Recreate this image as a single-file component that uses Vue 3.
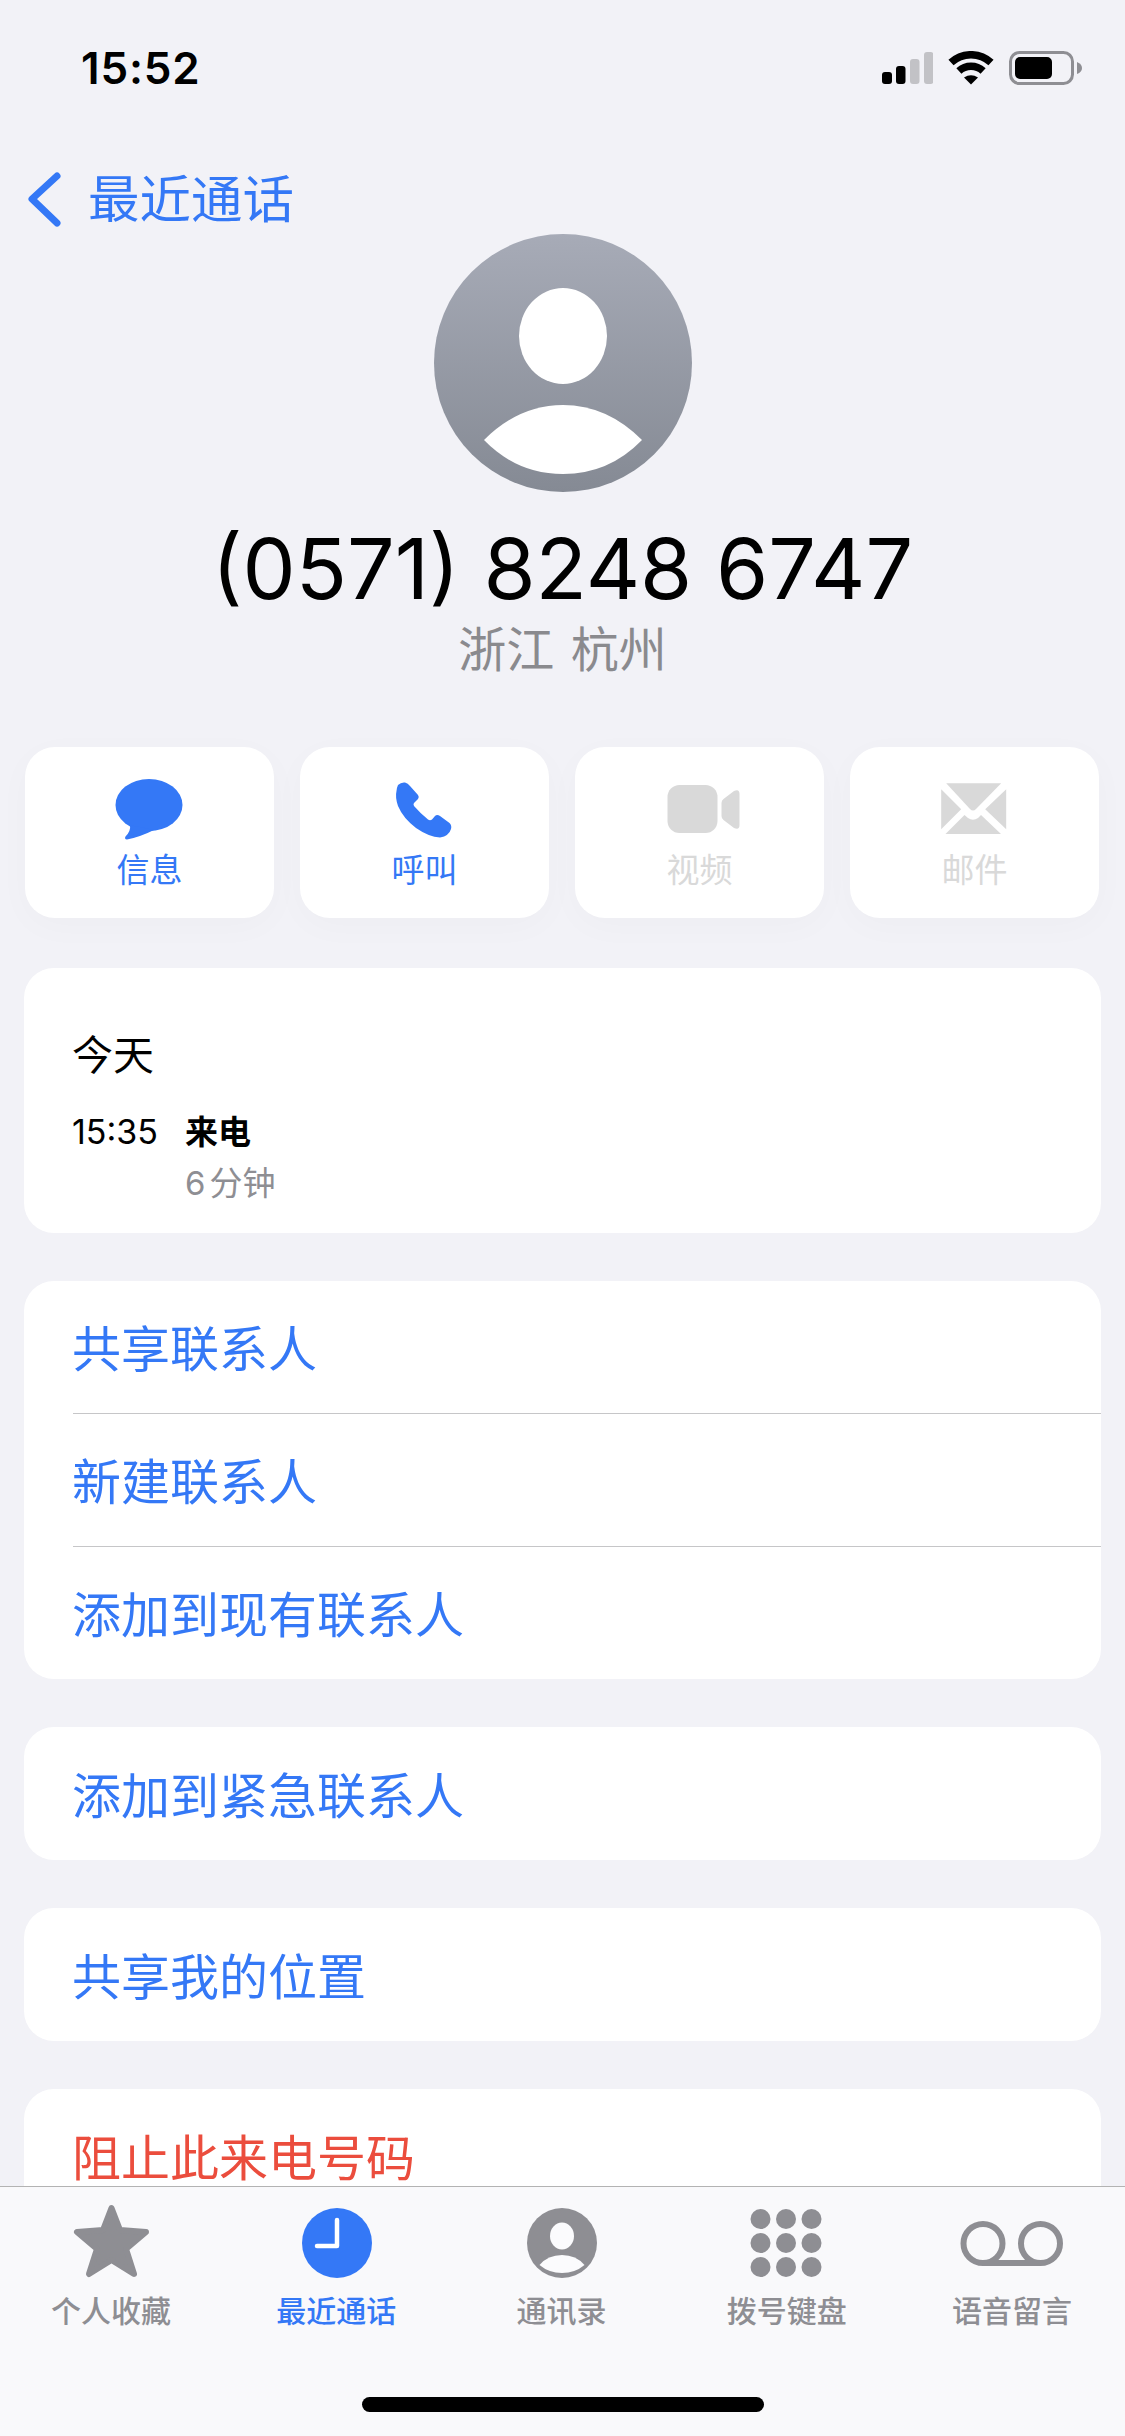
<script setup>
const tabs = [
  { id: 'fav', label: '个人收藏' },
  { id: 'recent', label: '最近通话', active: true },
  { id: 'contacts', label: '通讯录' },
  { id: 'keypad', label: '拨号键盘' },
  { id: 'voicemail', label: '语音留言' },
]
const dots = [33.5, 59, 84.5].flatMap((x) => [15, 39, 63].map((y) => ({ x, y })))
</script>

<template>
  <div class="page">
    <div class="status">
      <span class="time">15:52</span>
      <div class="status-icons">
        <svg width="51" height="34" viewBox="0 0 51 34">
          <rect x="0" y="21" width="10" height="12" rx="3" fill="#000" />
          <rect x="14" y="15" width="9.5" height="18" rx="3" fill="#000" />
          <rect x="28" y="8" width="9.5" height="25" rx="3" fill="#c2c2c6" />
          <rect x="42" y="1" width="9.5" height="32" rx="3" fill="#c2c2c6" />
        </svg>
        <svg width="46" height="34" viewBox="0 0 45 34">
          <path d="M2.5 11.6A29.3 29.3 0 0 1 42.5 11.6" fill="none" stroke="#000" stroke-width="7.5" />
          <path d="M10.4 20A17.8 17.8 0 0 1 34.6 20" fill="none" stroke="#000" stroke-width="7.5" />
          <path d="M22.5 33.5L15.5 26.4Q22.5 22 29.5 26.4Z" fill="#000" />
        </svg>
        <svg width="73" height="34" viewBox="0 0 73 34">
          <rect x="1.5" y="1.5" width="62" height="31" rx="9" fill="none" stroke="#8e8e93" stroke-width="3" />
          <rect x="6" y="6" width="37" height="22" rx="5" fill="#000" />
          <path d="M68 11Q73 13 73 17Q73 21 68 23Z" fill="#8e8e93" />
        </svg>
      </div>
    </div>

    <div class="nav">
      <svg width="40" height="60" viewBox="0 0 40 60">
        <path d="M33 7L8 30L33 54" fill="none" stroke="#3478f6" stroke-width="7" stroke-linecap="round" stroke-linejoin="round" />
      </svg>
      <span class="back-label">最近通话</span>
    </div>

    <svg class="avatar" width="258" height="258" viewBox="0 0 258 258">
      <defs>
        <linearGradient id="avatarFill" x1="0" y1="0" x2="0" y2="1">
          <stop offset="0" stop-color="#a7abb7" />
          <stop offset="1" stop-color="#858a94" />
        </linearGradient>
      </defs>
      <circle cx="129" cy="129" r="129" fill="url(#avatarFill)" />
      <ellipse cx="129" cy="102" rx="44" ry="48" fill="#fff" />
      <path d="M50 206Q85 171 129 171Q173 171 208 206Q175 240 129 240Q83 240 50 206Z" fill="#fff" />
    </svg>

    <div class="number">(0571) 8248 6747</div>
    <div class="region">浙江 杭州</div>

    <div class="actions">
      <div class="action blue">
        <svg width="80" height="62" viewBox="0 0 80 62">
          <ellipse cx="39" cy="26" rx="33.5" ry="26" fill="#3478f6" />
          <path d="M20 46Q21 52 15.5 57.5Q14 60 17 60.5Q30 58 44 51Z" fill="#3478f6" />
        </svg>
        <span>信息</span>
      </div>
      <div class="action blue">
        <svg width="80" height="62" viewBox="0 0 80 62">
          <path d="M13 6Q16 3 20 3.5Q23 4 25 7L33 16Q34.5 18 33 20L29 24Q28 25 29 27Q36 35 43 40.5Q45 42 47 40.5L50 37Q52 35 55 37L64.5 44Q67 46.5 66 50Q64 57 55 58.5Q44 58 31 49Q18 39 13 27Q10 18 11.5 12Q12 8 13 6Z" fill="#3478f6" />
        </svg>
        <span>呼叫</span>
      </div>
      <div class="action off">
        <svg width="80" height="62" viewBox="0 0 80 62">
          <rect x="7.5" y="6" width="50" height="48" rx="12" fill="#d9d9d9" />
          <path d="M61.5 24Q61.5 21.5 63.5 20L74 12Q79.5 9.5 79.5 15V46Q79.5 51.5 74 49L63.5 41Q61.5 39.5 61.5 37Z" fill="#d9d9d9" />
        </svg>
        <span>视频</span>
      </div>
      <div class="action off">
        <svg width="80" height="62" viewBox="0 0 80 62">
          <path d="M11.2 4.3H66.2L41 30Q38 33 35 30Z" fill="#d9d9d9" />
          <path d="M6.2 10.3V50.3L26.2 30.3Z" fill="#d9d9d9" />
          <path d="M71.2 10.3V50.3L50.2 30.3Z" fill="#d9d9d9" />
          <path d="M10.5 55L29.5 36L33 39Q38 42.5 43 39L46 36L66 55Z" fill="#d9d9d9" />
        </svg>
        <span>邮件</span>
      </div>
    </div>

    <div class="sections">
      <div class="card history">
        <div class="day">今天</div>
        <div class="call">
          <span class="call-time">15:35</span>
          <span class="call-type">来电</span>
          <span class="call-length"><i>6</i>分钟</span>
        </div>
      </div>

      <div class="card">
        <div class="row">共享联系人</div>
        <div class="row">新建联系人</div>
        <div class="row">添加到现有联系人</div>
      </div>
      <div class="card">
        <div class="row">添加到紧急联系人</div>
      </div>
      <div class="card">
        <div class="row">共享我的位置</div>
      </div>
      <div class="card">
        <div class="row red">阻止此来电号码</div>
      </div>
    </div>

    <div class="tabbar">
      <div class="tabs">
        <div v-for="tab in tabs" :key="tab.id" class="tab" :class="{ active: tab.active }">
          <svg width="120" height="80" viewBox="0 0 120 80">
            <polygon
              v-if="tab.id === 'fav'"
              points="59.5,4 68,26 94,28 74,45 82,70 59.5,56 37,70 45,45 25,28 51,26"
              fill="#8e8e93" stroke="#8e8e93" stroke-width="6" stroke-linejoin="round"
            />
            <template v-if="tab.id === 'recent'">
              <circle cx="60" cy="39" r="35" fill="#3478f6" />
              <path d="M60 16V42H40" fill="none" stroke="#fff" stroke-width="4.5" stroke-linecap="round" stroke-linejoin="round" />
            </template>
            <template v-if="tab.id === 'contacts'">
              <circle cx="60" cy="39" r="35" fill="#8e8e93" />
              <ellipse cx="60" cy="32" rx="12" ry="13.5" fill="#fbfbfd" />
              <path d="M37.5 61Q46 51 60 51Q74 51 82.5 61Q73 69 60 69Q47 69 37.5 61Z" fill="#fbfbfd" />
            </template>
            <template v-if="tab.id === 'keypad'">
              <circle v-for="d in dots" :key="d.x + '-' + d.y" :cx="d.x" :cy="d.y" r="10" fill="#8e8e93" />
            </template>
            <template v-if="tab.id === 'voicemail'">
              <circle cx="31" cy="39.5" r="19.5" fill="none" stroke="#8e8e93" stroke-width="6" />
              <circle cx="88.5" cy="39.5" r="19.5" fill="none" stroke="#8e8e93" stroke-width="6" />
              <path d="M31 59H88.5" stroke="#8e8e93" stroke-width="6" />
            </template>
          </svg>
          <span>{{ tab.label }}</span>
        </div>
      </div>
      <div class="home-bar"></div>
    </div>
  </div>
</template>

<style>
html,
body {
  margin: 0;
  background: #f2f2f7;
}
</style>

<style scoped>
.page {
  position: relative;
  width: 1125px;
  height: 2436px;
  overflow: hidden;
  background: #f2f2f7;
  font-family: Inter, "Noto Sans CJK SC", sans-serif;
  color: #000;
}

.status {
  display: flex;
  justify-content: space-between;
  align-items: center;
  box-sizing: border-box;
  height: 100px;
  padding: 36px 43px 0 81px;
}

.time {
  font-size: 44px;
  font-weight: 600;
  line-height: 50px;
  letter-spacing: 0.8px;
}

.status-icons {
  display: flex;
  align-items: center;
  gap: 15px;
}

.nav {
  display: flex;
  align-items: center;
  height: 60px;
  margin-top: 69px;
  padding-left: 24px;
  color: #3478f6;
}

.back-label {
  margin-left: 24px;
  font-size: 51.5px;
  line-height: 60px;
}

.avatar {
  display: block;
  margin: 5px auto 0;
}

.number {
  margin-top: 26px;
  font-size: 84.3px;
  line-height: 100px;
  text-align: center;
}

.region {
  margin-top: 2px;
  color: #8a8a8e;
  font-size: 48px;
  line-height: 60px;
  text-align: center;
  word-spacing: 3px;
}

.actions {
  display: grid;
  grid-template-columns: repeat(4, 249px);
  gap: 26px;
  margin-top: 67px;
  padding-left: 25px;
}

.action {
  display: flex;
  flex-direction: column;
  align-items: center;
  box-sizing: border-box;
  height: 171px;
  padding-top: 32px;
  background: #fff;
  border-radius: 30px;
  box-shadow: 0 8px 36px rgba(0, 0, 0, 0.025);
  font-size: 33px;
  line-height: 40px;
}

.action span {
  margin-top: 9px;
}

.blue {
  color: #3478f6;
}

.off {
  color: #d9d9d9;
}

.sections {
  display: flex;
  flex-direction: column;
  gap: 48px;
  margin-top: 50px;
  padding: 0 24px;
}

.card {
  flex: none;
  overflow: hidden;
  background: #fff;
  border-radius: 30px;
}

.history {
  box-sizing: border-box;
  height: 265px;
  padding: 62px 0 0 48px;
}

.day {
  font-size: 41px;
  line-height: 50px;
}

.call {
  display: grid;
  grid-template-columns: 113px 1fr;
  row-gap: 11px;
  margin-top: 32px;
  font-size: 33px;
  line-height: 40px;
}

.call-time {
  font-size: 34px;
}

.call-type {
  font-weight: 600;
}

.call-length {
  grid-column: 2;
  color: #8e8e93;
}

.call-length i {
  margin-right: 4px;
  font-style: normal;
}

.row {
  display: flex;
  align-items: center;
  box-sizing: border-box;
  height: 133px;
  margin-left: 49px;
  padding-bottom: 3px;
  color: #3478f6;
  font-size: 49px;
  text-indent: -1px;
}

.row + .row {
  border-top: 1px solid #c6c6c8;
}

.row:first-child:not(:last-child) {
  height: 132px;
}

.red {
  color: #eb4d3d;
}

.tabbar {
  position: absolute;
  left: 0;
  right: 0;
  top: 2186px;
  bottom: 0;
  display: flex;
  flex-direction: column;
  box-sizing: border-box;
  padding-top: 17px;
  background: #f9f9fb;
  border-top: 1px solid #b3b3b3;
}

.tabs {
  display: grid;
  grid-template-columns: repeat(5, 1fr);
  margin-left: -1px;
}

.tab {
  display: flex;
  flex-direction: column;
  align-items: center;
  color: #8e8e93;
  font-size: 30px;
  font-weight: 500;
  line-height: 40px;
}

.tab span {
  margin-top: 7px;
  margin-left: -1px;
}

.tab.active {
  color: #3478f6;
}

.home-bar {
  align-self: center;
  width: 402px;
  height: 15px;
  margin-top: 66px;
  background: #000;
  border-radius: 8px;
}
</style>
